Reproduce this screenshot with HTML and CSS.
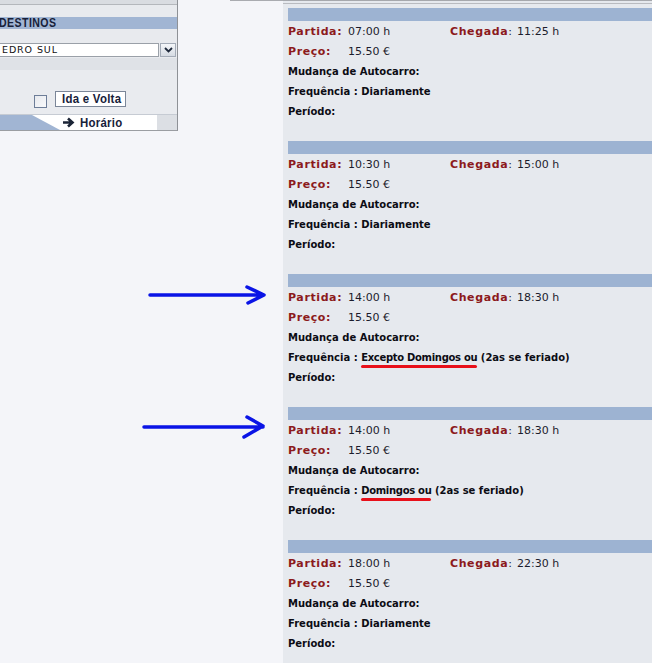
FILE: index.html
```html
<!DOCTYPE html>
<html lang="pt">
<head>
  <meta charset="UTF-8">
  <meta name="viewport" content="width=device-width, initial-scale=1.0">
  <title>Horários</title>
  <link rel="stylesheet" href="styles.css">
</head>
<body>
  <div class="page">
    <div class="side">
      <div class="side-top"></div>
      <div class="side-head"><span class="narrow">DESTINOS</span></div>
      <div class="pick">
        <div class="pick-box">EDRO SUL</div>
        <div class="pick-btn">
          <svg width="9" height="6" viewBox="0 0 9 6"><path d="M1 1 L4.5 4.5 L8 1" fill="none" stroke="#1f2a3c" stroke-width="1.8"/></svg>
        </div>
      </div>
      <div class="side-band"></div>
      <div class="trip">
        <span class="check"></span>
        <span class="trip-btn"><span class="narrow">Ida e Volta</span></span>
      </div>
      <div class="tabs">
        <svg class="tab-slant" width="60" height="15" viewBox="0 0 60 15"><polygon points="0,0 32,0 60,15 0,15" fill="#a1b5d3"/></svg>
        <span class="tab-main">
          <svg width="14" height="11" viewBox="0 0 14 11"><path d="M1 5.5 H9 M6 1.5 L10.5 5.5 L6 9.5" fill="none" stroke="#1b2436" stroke-width="2.6"/></svg>
          <span class="narrow">Horário</span>
        </span>
        <span class="tab-end"></span>
      </div>
    </div>

    <div class="gap">
      <div class="gap-rule"></div>
    </div>

    <div class="times">
      <div class="times-rule"></div>

      <div class="card">
        <div class="card-bar"></div>
        <div class="card-body">
          <div class="row times-row"><span class="lbl">Partida:</span><span class="val">07:00 h</span><span class="lbl">Chegada<span class="colon">:</span></span><span class="val">11:25 h</span></div>
          <div class="row times-row"><span class="lbl">Preço:</span><span class="val">15.50 €</span></div>
          <div class="row info">Mudança de Autocarro:</div>
          <div class="row info">Frequência : Diariamente</div>
          <div class="row info">Período:</div>
        </div>
      </div>

      <div class="card">
        <div class="card-bar"></div>
        <div class="card-body">
          <div class="row times-row"><span class="lbl">Partida:</span><span class="val">10:30 h</span><span class="lbl">Chegada<span class="colon">:</span></span><span class="val">15:00 h</span></div>
          <div class="row times-row"><span class="lbl">Preço:</span><span class="val">15.50 €</span></div>
          <div class="row info">Mudança de Autocarro:</div>
          <div class="row info">Frequência : Diariamente</div>
          <div class="row info">Período:</div>
        </div>
      </div>

      <div class="card">
        <div class="card-bar"></div>
        <div class="card-body">
          <div class="row times-row"><span class="lbl">Partida:</span><span class="val">14:00 h</span><span class="lbl">Chegada<span class="colon">:</span></span><span class="val">18:30 h</span></div>
          <div class="row times-row"><span class="lbl">Preço:</span><span class="val">15.50 €</span></div>
          <div class="row info">Mudança de Autocarro:</div>
          <div class="row info">Frequência : <span class="mark">Excepto Domingos ou</span> (2as se feriado)</div>
          <div class="row info">Período:</div>
        </div>
      </div>

      <div class="card">
        <div class="card-bar"></div>
        <div class="card-body">
          <div class="row times-row"><span class="lbl">Partida:</span><span class="val">14:00 h</span><span class="lbl">Chegada<span class="colon">:</span></span><span class="val">18:30 h</span></div>
          <div class="row times-row"><span class="lbl">Preço:</span><span class="val">15.50 €</span></div>
          <div class="row info">Mudança de Autocarro:</div>
          <div class="row info">Frequência : <span class="mark">Domingos ou</span> (2as se feriado)</div>
          <div class="row info">Período:</div>
        </div>
      </div>

      <div class="card">
        <div class="card-bar"></div>
        <div class="card-body">
          <div class="row times-row"><span class="lbl">Partida:</span><span class="val">18:00 h</span><span class="lbl">Chegada<span class="colon">:</span></span><span class="val">22:30 h</span></div>
          <div class="row times-row"><span class="lbl">Preço:</span><span class="val">15.50 €</span></div>
          <div class="row info">Mudança de Autocarro:</div>
          <div class="row info">Frequência : Diariamente</div>
          <div class="row info">Período:</div>
        </div>
      </div>
    </div>

    <!-- annotations drawn over the page -->
    <svg class="note note-one" width="120" height="22" viewBox="0 0 120 22">
      <path d="M2 11 H115 M99 3 L116 11 L100 19" fill="none" stroke="#0a14e6" stroke-width="3.5" stroke-linecap="round" stroke-linejoin="round"/>
    </svg>
    <svg class="note note-two" width="126" height="26" viewBox="0 0 126 26">
      <path d="M2 13 H121 M105 3 L121 12 L102 23" fill="none" stroke="#0a14e6" stroke-width="3.5" stroke-linecap="round" stroke-linejoin="round"/>
    </svg>
  </div>
</body>
</html>
```

FILE: styles.css
```css
body {
  margin: 0;
  background: #f4f5f9;
  font-family: "DejaVu Sans", Verdana, sans-serif;
}
.page {
  position: relative;
  display: flex;
  align-items: flex-start;
  width: 652px;
  height: 663px;
  overflow: hidden;
}

/* squeezed bold titles */
.narrow {
  display: inline-block;
  font-family: "Liberation Sans", Arial, sans-serif;
  font-weight: bold;
  white-space: nowrap;
  transform: scaleX(0.88);
  transform-origin: left center;
}

/* left search panel */
.side {
  width: 177px;
  background: #e8eaee;
  border-right: 1px solid #8e9196;
  border-bottom: 1px solid #9a9da2;
  overflow: hidden;
}
.side-top {
  height: 4px;
  background: #d9dce1;
  border-bottom: 1px solid #b4b7bc;
}
.side-head {
  margin-top: 12px;
  height: 12px;
  line-height: 13px;
  background: #a1b5d3;
  color: #17213a;
  font-size: 12px;
  letter-spacing: 0.5px;
}
.side-head .narrow {
  margin-left: -1px;
}
.pick {
  display: flex;
  margin-top: 14px;
  height: 14px;
}
.pick-box {
  width: 159px;
  background: #fff;
  border: 1px solid #9aa0a8;
  border-left: none;
  box-sizing: border-box;
  padding-left: 2px;
  font-size: 9.5px;
  line-height: 12px;
  letter-spacing: 0.9px;
  color: #111;
}
.pick-btn {
  width: 16px;
  margin-left: 1px;
  box-sizing: border-box;
  border: 1px solid #a3abb7;
  background: linear-gradient(#f4f6f9, #d6dbe3);
  display: flex;
  align-items: center;
  justify-content: center;
}
.side-band {
  margin-top: 1px;
  height: 12px;
  background: #dfe2e7;
}
.trip {
  height: 44px;
  display: flex;
  align-items: flex-end;
  padding-left: 34px;
  padding-bottom: 6px;
  box-sizing: border-box;
  background: #e9ebef;
}
.check {
  width: 11px;
  height: 11px;
  border: 1px solid #6d7d98;
  background: linear-gradient(135deg, #e7e9ee, #f8f9fb);
}
.trip-btn {
  margin-left: 8px;
  margin-bottom: 1px;
  width: 71px;
  height: 16px;
  box-sizing: border-box;
  border: 1px solid #7b8698;
  background: #fff;
  color: #17213a;
  font-size: 13px;
  line-height: 14px;
  padding-left: 6px;
  letter-spacing: 0.3px;
  overflow: hidden;
}
.tabs {
  display: flex;
  height: 16px;
  background: #fff;
  border-top: 1px solid #c6cbd3;
  box-sizing: border-box;
}
.tab-slant {
  display: block;
  flex: none;
}
.tab-main {
  width: 95px;
  display: flex;
  align-items: center;
  gap: 4px;
  padding-left: 2px;
  color: #17213a;
  font-size: 13px;
  letter-spacing: 0.3px;
  white-space: nowrap;
}
.tab-end {
  flex: 1;
  background: #dcdfe4;
}

/* middle strip */
.gap {
  width: 105px;
}
.gap-rule {
  margin-left: 52px;
  border-top: 1px solid #a9abb0;
}

/* timetable column */
.times {
  width: 369px;
  height: 663px;
  background: #e6e9ee;
  border-top: 1px solid #a6a8ad;
}
.times-rule {
  height: 1px;
  border-bottom: 1px solid #b9bbc0;
  margin-top: 1px;
  margin-bottom: 4px;
}
.card {
  margin-bottom: 19px;
}
.card-bar {
  height: 13px;
  margin-left: 5px;
  background: #9db3d2;
}
.card-body {
  padding: 1px 0 0 5px;
}
.row {
  height: 20px;
  line-height: 20px;
  white-space: nowrap;
}
.times-row {
  display: grid;
  grid-template-columns: 60px 102px 67px auto;
}
.lbl {
  color: #8c1a1c;
  font-weight: bold;
  font-size: 11px;
  letter-spacing: 0.6px;
}
.colon {
  color: #1c1c2c;
  font-weight: normal;
  letter-spacing: 0;
}
.val {
  color: #1c1c2c;
  font-size: 11px;
}
.info {
  color: #0c0c14;
  font-weight: bold;
  font-size: 10px;
}
.mark {
  position: relative;
  letter-spacing: -0.3px;
}
.mark::after {
  content: "";
  position: absolute;
  left: 0;
  right: 0;
  bottom: -5px;
  height: 3px;
  border-radius: 2px;
  background: #e8101a;
}

/* hand-drawn arrows */
.note {
  position: absolute;
}
.note-one {
  left: 148px;
  top: 284px;
}
.note-two {
  left: 142px;
  top: 414px;
}
```
